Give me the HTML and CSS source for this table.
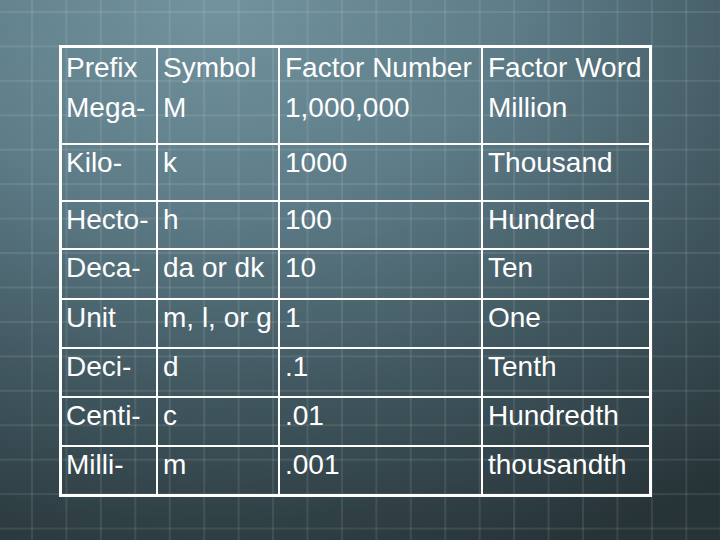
FILE: index.html
```html
<!DOCTYPE html>
<html>
<head>
<meta charset="utf-8">
<link rel="stylesheet" href="styles.css">
</head>
<body>
<div class="slide">
  <table class="units">
    <colgroup>
      <col class="c1"><col class="c2"><col class="c3"><col class="c4">
    </colgroup>
    <tr class="r1">
      <td>Prefix<br>Mega-</td>
      <td>Symbol<br>M</td>
      <td>Factor Number<br>1,000,000</td>
      <td>Factor Word<br>Million</td>
    </tr>
    <tr class="r2">
      <td>Kilo-</td><td>k</td><td>1000</td><td>Thousand</td>
    </tr>
    <tr class="r3">
      <td>Hecto-</td><td>h</td><td>100</td><td>Hundred</td>
    </tr>
    <tr class="r4">
      <td>Deca-</td><td>da or dk</td><td>10</td><td>Ten</td>
    </tr>
    <tr class="rn">
      <td>Unit</td><td>m, l, or g</td><td>1</td><td>One</td>
    </tr>
    <tr class="rn">
      <td>Deci-</td><td>d</td><td>.1</td><td>Tenth</td>
    </tr>
    <tr class="rn">
      <td>Centi-</td><td>c</td><td>.01</td><td>Hundredth</td>
    </tr>
    <tr class="rn">
      <td>Milli-</td><td>m</td><td>.001</td><td>thousandth</td>
    </tr>
  </table>
</div>
</body>
</html>
```

FILE: styles.css
```css
html, body {
  margin: 0;
  padding: 0;
}
body {
  width: 720px;
  height: 540px;
  overflow: hidden;
  background-color: #3f565e;
  background-image:
    linear-gradient(90deg, rgba(255,255,255,0.09) 0, rgba(255,255,255,0.09) 2px, transparent 2px),
    linear-gradient(180deg, rgba(255,255,255,0.09) 0, rgba(255,255,255,0.09) 2px, transparent 2px),
    radial-gradient(ellipse 120% 110% at 30% 0%, #72949f 0%, #5d7c88 35%, #3f555d 68%, #263337 100%);
  background-size: 34.45px 100%, 100% 34.45px, 100% 100%;
  background-position: 31px 0, 0 11px, 0 0;
  font-family: "Liberation Sans", Arial, sans-serif;
  color: #ffffff;
}
.slide {
  padding: 45px 0 0 59px;
}
.units {
  border-collapse: separate;
  border-spacing: 0;
  border: 3px solid #ffffff;
  table-layout: fixed;
  width: 593px;
  font-size: 28px;
  line-height: 32px;
}
.c1 { width: 94px; }
.c2 { width: 122px; }
.c3 { width: 203px; }
.c4 { width: 168px; }
.units td {
  box-sizing: border-box;
  vertical-align: top;
  padding: 2px 0 0 5px;
  border-left: 2px solid #ffffff;
  border-top: 2px solid #ffffff;
  white-space: nowrap;
}
.units td:first-child {
  border-left: none;
  padding-left: 4px;
}
.units .r1 td {
  border-top: none;
  line-height: 40px;
  padding-top: 0;
  height: 95px;
}
.units .r2 td { height: 57px; }
.units .r3 td { height: 48px; }
.units .r4 td { height: 50px; }
.units .rn td { height: 49px; }
```
